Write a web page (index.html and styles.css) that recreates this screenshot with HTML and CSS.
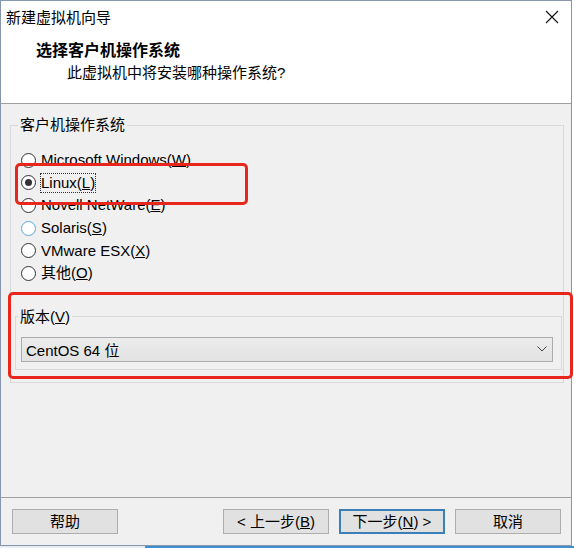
FILE: index.html
```html
<!DOCTYPE html>
<html lang="zh-CN">
<head>
<meta charset="utf-8">
<title>新建虚拟机向导</title>
<link rel="stylesheet" href="styles.css">
</head>
<body>
<div class="window">
  <div class="titlebar">
    <span class="title">新建虚拟机向导</span>
    <svg class="close" width="14" height="14" viewBox="0 0 14 14"><path d="M1 1 L13 13 M13 1 L1 13" stroke="#111" stroke-width="1.1" fill="none"/></svg>
  </div>
  <div class="header">
    <div class="h-title">选择客户机操作系统</div>
    <div class="h-sub">此虚拟机中将安装哪种操作系统?</div>
  </div>
  <div class="content">
    <fieldset class="group os-group">
      <legend>客户机操作系统</legend>
      <div class="radios">
        <div class="row"><span class="radio"></span><span class="lbl">Microsoft Windows(<u>W</u>)</span></div>
        <div class="row"><span class="radio checked"></span><span class="lbl focus">Linux(<u>L</u>)</span></div>
        <div class="row"><span class="radio"></span><span class="lbl">Novell NetWare(<u>E</u>)</span></div>
        <div class="row"><span class="radio hover"></span><span class="lbl">Solaris(<u>S</u>)</span></div>
        <div class="row"><span class="radio"></span><span class="lbl">VMware ESX(<u>X</u>)</span></div>
        <div class="row"><span class="radio"></span><span class="lbl">其他(<u>O</u>)</span></div>
      </div>
      <fieldset class="group ver-group">
        <legend>版本(<u>V</u>)</legend>
        <div class="select">
          <span>CentOS 64 位</span>
          <svg class="chev" width="10" height="6" viewBox="0 0 10 6"><path d="M0.5 0.5 L5 5 L9.5 0.5" stroke="#444" stroke-width="1" fill="none"/></svg>
        </div>
      </fieldset>
    </fieldset>
  </div>
  <div class="footer">
    <div class="btn">帮助</div>
    <div class="btn-group">
      <div class="btn">&lt; 上一步(<u>B</u>)</div>
      <div class="btn default">下一步(<u>N</u>) &gt;</div>
      <div class="btn">取消</div>
    </div>
  </div>
  <div class="mark mark-linux"></div>
  <div class="mark mark-version"></div>
</div>
</body>
</html>
```
FILE: styles.css
```css
html, body {
  margin: 0;
  padding: 0;
}
body {
  width: 574px;
  height: 548px;
  background: linear-gradient(to bottom, #ffffff 0, #ffffff 546px, transparent 546px),
              linear-gradient(to right, #e6eef5 0, #e6eef5 145px, #3f8fcf 145px);
  font-family: "Liberation Sans", "Noto Sans CJK SC", sans-serif;
  font-size: 15px;
  color: #000;
  overflow: hidden;
}
.window {
  position: relative;
  box-sizing: border-box;
  width: 572px;
  height: 546px;
  border: 1px solid #8596ad;
  background: #f0f0f0;
  display: flex;
  flex-direction: column;
}
.titlebar {
  height: 30px;
  background: #fff;
  display: flex;
  align-items: center;
  justify-content: space-between;
  padding: 0 12px 0 5px;
}
.title {
  line-height: 20px;
  margin-top: 3px;
}
.close {
  display: block;
  margin-top: 1px;
}
.header {
  background: #fff;
  border-bottom: 1px solid #a0a0a0;
  padding-top: 10px;
  box-sizing: border-box;
  height: 73px;
}
.h-title {
  font-weight: bold;
  font-size: 16px;
  line-height: 20px;
  padding-left: 35px;
}
.h-sub {
  line-height: 20px;
  margin-top: 2px;
  padding-left: 66px;
}
.content {
  flex: 1;
  padding: 11px 7px 0 9px;
}
.group {
  margin: 0;
  border: 1px solid #d9d9d9;
  min-width: 0;
}
.group legend {
  line-height: 20px;
  padding: 0 2px;
}
.os-group {
  padding: 0 1px 12px 4px;
}
.os-group > legend {
  margin-left: 3px;
}
.radios {
  padding: 14px 0 0 6px;
}
.row {
  height: 22.6px;
  display: flex;
  align-items: center;
}
.radio {
  box-sizing: border-box;
  width: 15px;
  height: 15px;
  border: 1px solid #333;
  border-radius: 50%;
  background: #fff;
  margin-right: 5px;
  display: flex;
  align-items: center;
  justify-content: center;
  flex: none;
}
.radio.checked::after {
  content: "";
  width: 7px;
  height: 7px;
  border-radius: 50%;
  background: #333;
}
.radio.hover {
  border-color: #5aa6dc;
}
.lbl {
  line-height: 18px;
}
.lbl.focus {
  outline: 1px dotted #333;
  outline-offset: 0;
}
.ver-group {
  margin-top: 22px;
  padding: 10px 8px 7px 5px;
}
.ver-group > legend {
  margin-left: -3px;
}
.select {
  box-sizing: border-box;
  height: 25px;
  border: 1px solid #acacac;
  background: linear-gradient(#ececec, #e2e2e2);
  display: flex;
  align-items: center;
  justify-content: space-between;
  padding: 0 5px 0 4px;
}
.chev {
  display: block;
}
.footer {
  height: 48px;
  box-sizing: border-box;
  border-top: 1px solid #a0a0a0;
  padding: 11px 10px 11px 11px;
  display: flex;
  justify-content: space-between;
}
.btn-group {
  display: flex;
  gap: 10px;
}
.btn {
  box-sizing: border-box;
  width: 106px;
  height: 25px;
  border: 1px solid #adadad;
  background: #e1e1e1;
  display: flex;
  align-items: center;
  justify-content: center;
  line-height: 20px;
}
.btn.default {
  border: 2px solid #3b7fb8;
}
.mark {
  position: absolute;
  border: 3px solid #e8261c;
  border-radius: 5px;
  box-sizing: border-box;
}
.mark-linux {
  left: 14px;
  top: 162px;
  width: 233px;
  height: 42px;
}
.mark-version {
  left: 7px;
  top: 291px;
  width: 565px;
  height: 87px;
}
```
